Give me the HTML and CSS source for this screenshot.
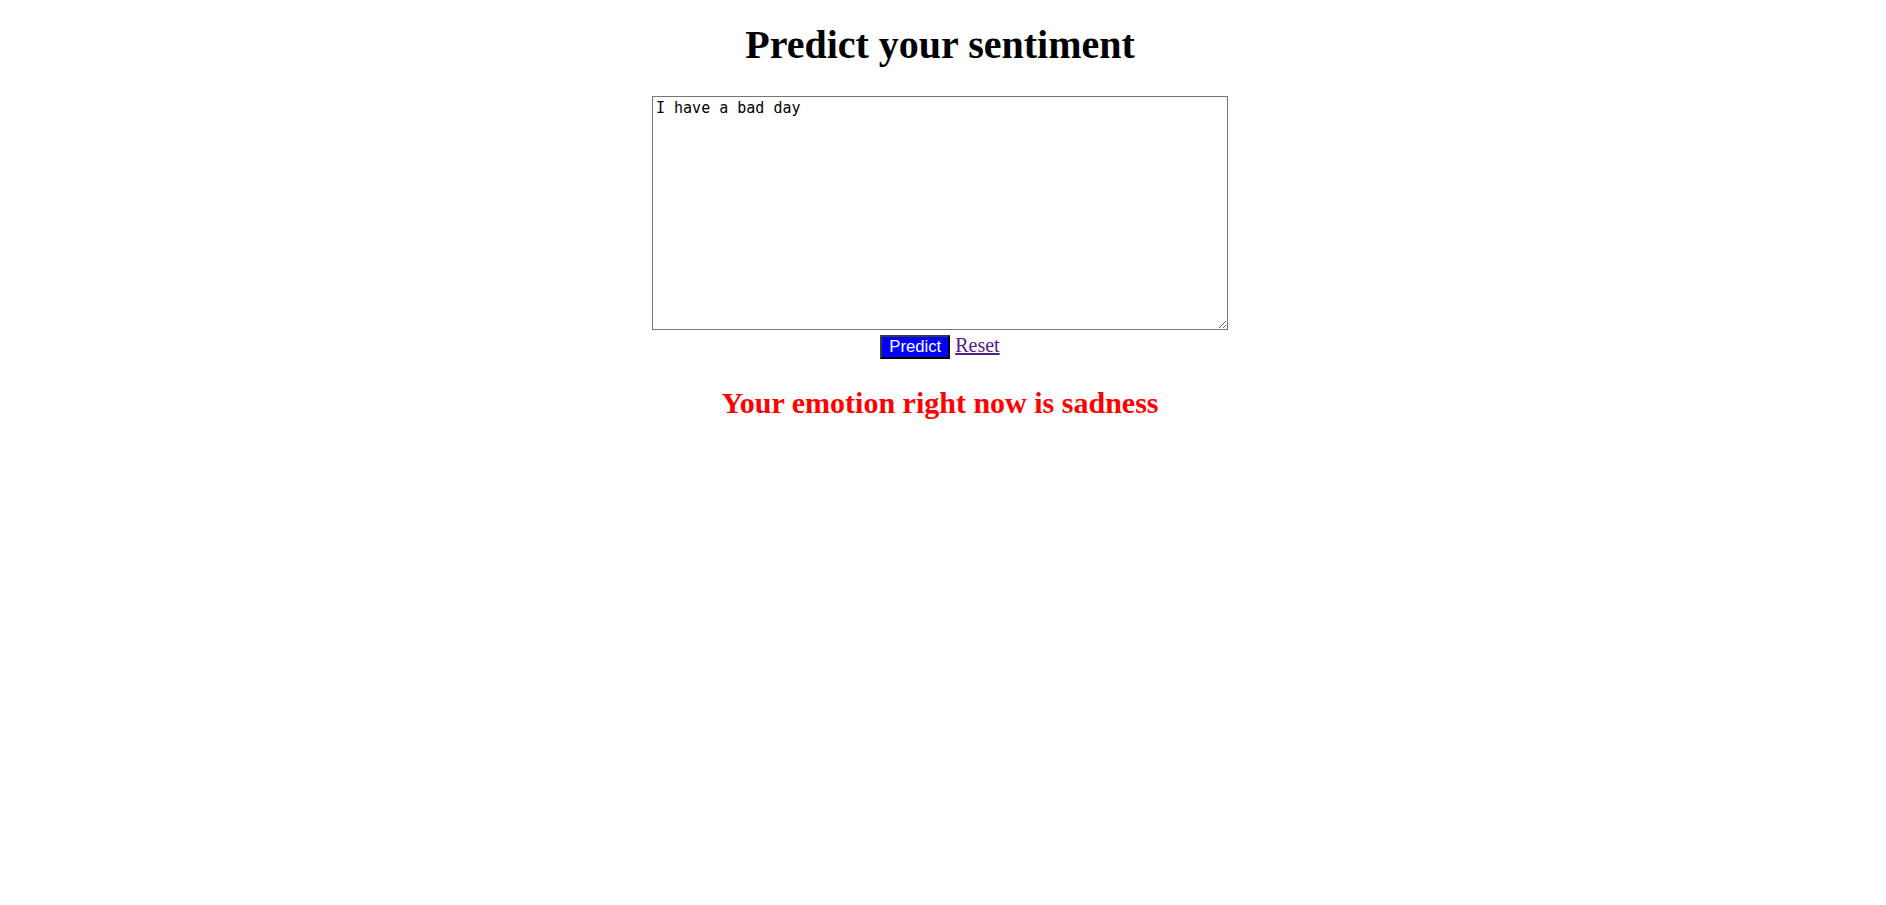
FILE: index.html
```html
<!DOCTYPE html>
<html>
<head>
<meta charset="utf-8">
<title>Predict your sentiment</title>
<link rel="stylesheet" href="styles.css">
</head>
<body class="page">
<div class="center">
<h1 class="title">Predict your sentiment</h1>
<form class="form">
<textarea class="input" name="text">I have a bad day</textarea>
<div class="actions"><button type="button" class="btn">Predict</button> <a class="reset" href="#">Reset</a></div>
</form>
<h2 class="result">Your emotion right now is sadness</h2>
</div>
</body>
</html>
```
FILE: styles.css
```css
html, body { background: #fff; }
.page { margin: 0; padding: 0 16px 0 10px; font-family: "Liberation Serif", "Times New Roman", serif; }
.center { text-align: center; }
.title { font-size: 40px; line-height: 46px; font-weight: bold; margin: 21.5px 0 0; }
.form { margin: 28px 0 0; }
.input {
  display: block; margin: 0 auto; box-sizing: border-box;
  width: 576px; height: 234px;
  font-family: "DejaVu Sans Mono", "Liberation Mono", monospace; font-size: 15px;
  padding: 2px 2px 2px 3px; border: 1px solid #767676; border-radius: 0; resize: both;
  color: #000;
}
.actions { margin-top: 4px; font-size: 20px; line-height: 22px; }
.btn {
  box-sizing: border-box; height: 24px;
  background: #0000ff; color: #fff; font-family: "Liberation Sans", Arial, sans-serif;
  font-size: 16.67px; line-height: 18px; padding: 1px 7px; margin: 0;
  border: 2px solid; border-color: #3c3c3c #000 #000 #3c3c3c; border-radius: 0;
  vertical-align: baseline;
}
.reset { color: #551a8b; font-size: 20px; text-decoration: underline; }
.result { color: #ff0000; font-size: 30px; line-height: 35px; font-weight: bold; margin: 26px 0 0; }
```
